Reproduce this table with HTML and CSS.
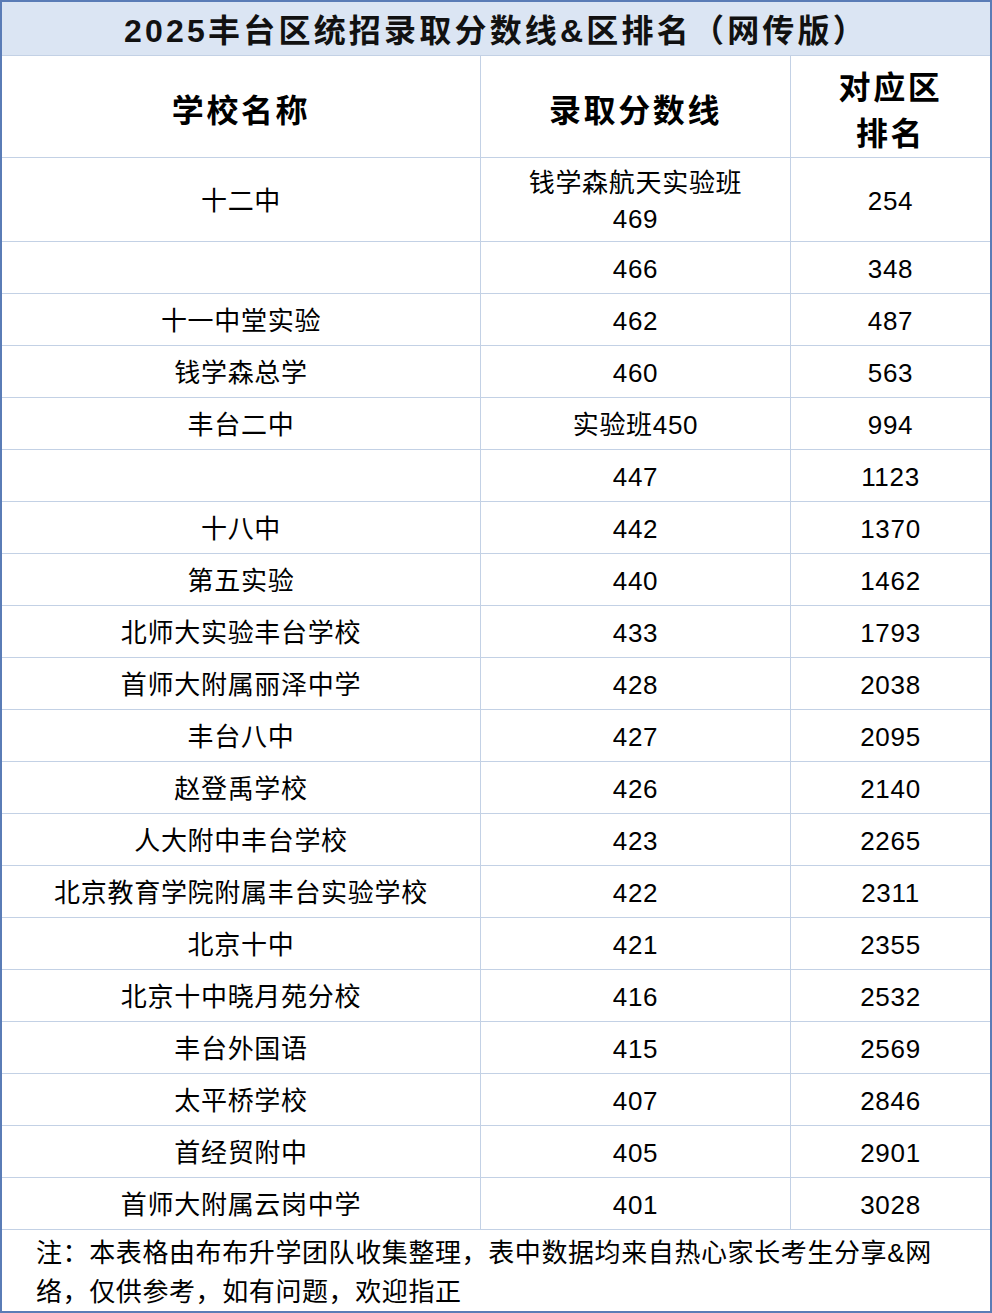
FILE: index.html
```html
<!DOCTYPE html>
<html lang="zh-CN">
<head>
<meta charset="utf-8">
<title>2025丰台区统招录取分数线&amp;区排名（网传版）</title>
<link rel="stylesheet" href="styles.css">
</head>
<body>
<div class="sheet">
  <div class="title">2025丰台区统招录取分数线&amp;区排名（网传版）</div>
  <div class="grid">
    <div class="cell head">学校名称</div>
    <div class="cell head">录取分数线</div>
    <div class="cell head">对应区<br>排名</div>

    <div class="cell">十二中</div>
    <div class="cell">钱学森航天实验班<br>469</div>
    <div class="cell">254</div>

    <div class="cell"></div><div class="cell">466</div><div class="cell">348</div>
    <div class="cell">十一中堂实验</div><div class="cell">462</div><div class="cell">487</div>
    <div class="cell">钱学森总学</div><div class="cell">460</div><div class="cell">563</div>
    <div class="cell">丰台二中</div><div class="cell">实验班450</div><div class="cell">994</div>
    <div class="cell"></div><div class="cell">447</div><div class="cell">1123</div>
    <div class="cell">十八中</div><div class="cell">442</div><div class="cell">1370</div>
    <div class="cell">第五实验</div><div class="cell">440</div><div class="cell">1462</div>
    <div class="cell">北师大实验丰台学校</div><div class="cell">433</div><div class="cell">1793</div>
    <div class="cell">首师大附属丽泽中学</div><div class="cell">428</div><div class="cell">2038</div>
    <div class="cell">丰台八中</div><div class="cell">427</div><div class="cell">2095</div>
    <div class="cell">赵登禹学校</div><div class="cell">426</div><div class="cell">2140</div>
    <div class="cell">人大附中丰台学校</div><div class="cell">423</div><div class="cell">2265</div>
    <div class="cell">北京教育学院附属丰台实验学校</div><div class="cell">422</div><div class="cell">2311</div>
    <div class="cell">北京十中</div><div class="cell">421</div><div class="cell">2355</div>
    <div class="cell">北京十中晓月苑分校</div><div class="cell">416</div><div class="cell">2532</div>
    <div class="cell">丰台外国语</div><div class="cell">415</div><div class="cell">2569</div>
    <div class="cell">太平桥学校</div><div class="cell">407</div><div class="cell">2846</div>
    <div class="cell">首经贸附中</div><div class="cell">405</div><div class="cell">2901</div>
    <div class="cell">首师大附属云岗中学</div><div class="cell">401</div><div class="cell">3028</div>
  </div>
  <div class="note">注：本表格由布布升学团队收集整理，表中数据均来自热心家长考生分享&amp;网络，仅供参考，如有问题，欢迎指正</div>
</div>
</body>
</html>
```

FILE: styles.css
```css
html, body {
  margin: 0;
  padding: 0;
  background: #ffffff;
}

.sheet {
  width: 992px;
  box-sizing: border-box;
  border: 2px solid #5a7cb6;
  font-family: "Liberation Sans", "Noto Sans CJK SC", sans-serif;
  color: #000;
}

.title {
  height: 54px;
  box-sizing: border-box;
  border-bottom: 1px solid #c3d1e5;
  background: #dbe5f3;
  display: flex;
  align-items: center;
  justify-content: center;
  font-size: 32px;
  font-weight: bold;
  letter-spacing: 3.2px;
  color: #111;
  padding-bottom: 2px;
}

.grid {
  display: grid;
  grid-template-columns: 479px 310px 1fr;
  grid-template-rows: 102px 84px repeat(19, 52px);
}

.cell {
  box-sizing: border-box;
  border-bottom: 1px solid #c3d1e5;
  border-right: 1px solid #c3d1e5;
  display: flex;
  align-items: center;
  justify-content: center;
  text-align: center;
  font-size: 26px;
  letter-spacing: 0.7px;
  line-height: 36px;
  padding-top: 2px;
}

.cell:nth-child(3n) {
  border-right: none;
}

.head {
  font-size: 32px;
  font-weight: bold;
  letter-spacing: 2.6px;
  line-height: 46px;
  padding-top: 8px;
}

.note {
  height: 81px;
  box-sizing: border-box;
  padding: 4px 40px 0 34px;
  font-size: 26px;
  letter-spacing: 0.6px;
  line-height: 39px;
}
```
